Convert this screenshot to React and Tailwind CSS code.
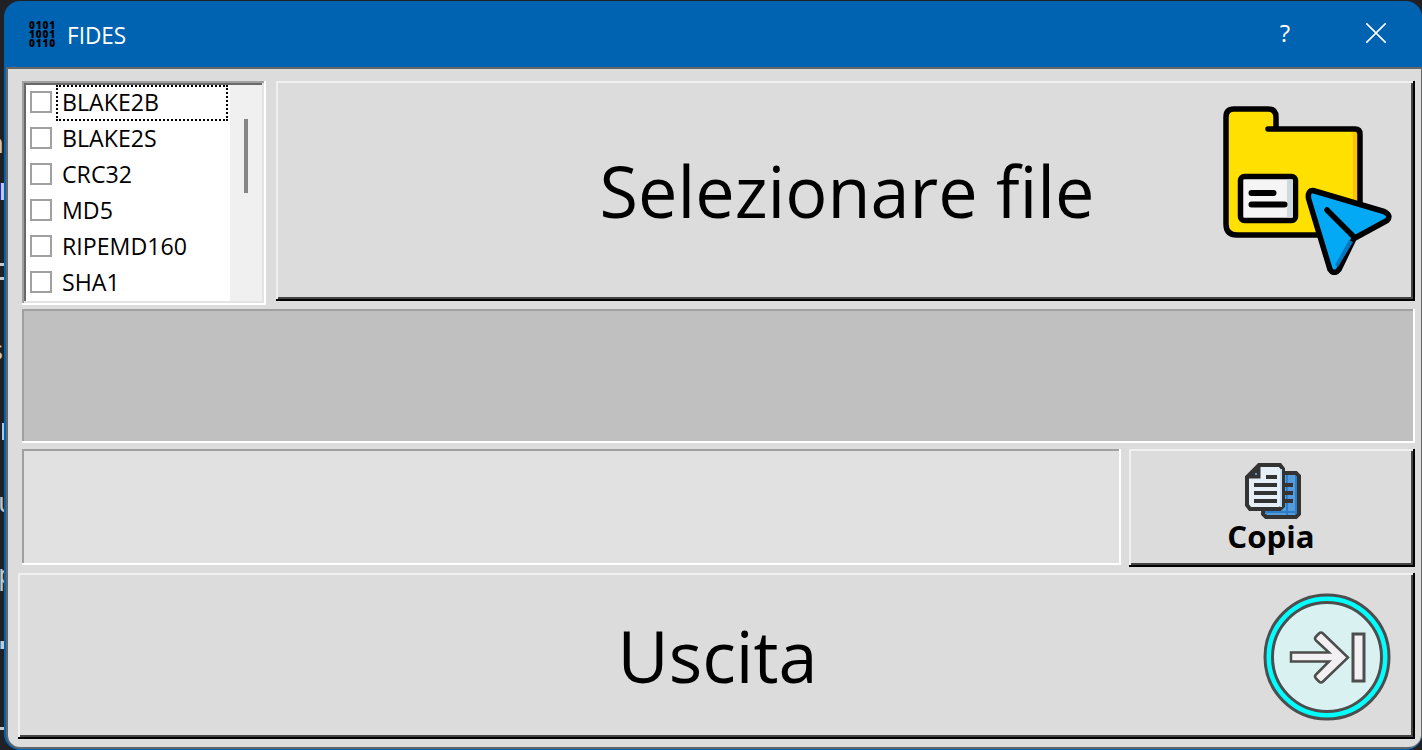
import React from 'react';

const algorithms = ['BLAKE2B', 'BLAKE2S', 'CRC32', 'MD5', 'RIPEMD160', 'SHA1'];

const raised =
  'block shadow-[inset_-2px_-2px_0_#000,inset_2px_2px_0_#f0f0f0,inset_-4px_-4px_0_#444]';
const sunken = 'shadow-[inset_-2px_-2px_0_#fff,inset_2px_2px_0_#a0a0a0]';

const FolderIcon = () => (
  <svg className="h-[170px] w-[170px]" viewBox="1222 106 170 170" fill="none" stroke="#000" strokeWidth="5.500" strokeLinecap="round" strokeLinejoin="round">
    <path d="M1226 117q0-7 7-7h36q7 0 7 7v12h80q4 0 4 4v103h-124q-10 0-10-10z" fill="#ffe000" stroke="none" />
    <path d="M1353 132h5v75h-5z" fill="#ffc107" stroke="none" />
    <path d="M1268 130h87q5 0 5 5v70M1276 128v-10q0-8-8-8h-34q-8 0-8 8v107q0 11 11 11h82" />
    <rect x="1240.500" y="177.500" width="55" height="44" rx="4" fill="#f5f5f5" />
    <path d="M1287 180.500h6v38h-6z" fill="#cfd8dc" stroke="none" />
    <path d="M1251.500 194h22M1251.500 205.500h33" strokeWidth="6" />
    <path d="M1313 191.500l71 21q8 4 3 9l-33 18-15 31q-5 6-9 0l-21.500-71q-1-8 4.500-8z" fill="#03a9f4" />
    <path d="M1353 243l-15 25-3-2 14-25z" fill="#0277bd" stroke="none" />
    <path d="M1327 211l27 27" />
  </svg>
);

const CopyIcon = () => (
  <svg className="h-14 w-14" viewBox="0 0 56 56" stroke="#333" strokeWidth="4">
    <path d="M20 10h31l3 3v38l-3 3H21l-3-3z" fill="#559bd9" />
    <path d="M51 13v38M42 12v40M20 49h31" stroke="#2b7ec9" strokeWidth="2" />
    <path d="M40 22h8M40 30h8M40 38h8" />
    <path d="M14 2h21l3 4v37l-3 3H5l-3-4V14z" fill="#e6eff8" />
    <path d="M36 6v38" stroke="#c5ddf2" strokeWidth="2" />
    <path d="M14 3v11H3z" fill="#333" strokeWidth="3" />
    <path d="M10 11h2" stroke="#559bd9" strokeWidth="2" />
    <path d="M21 14h11M9 22h23M9 30h23M9 38h23" />
  </svg>
);

const ExitIcon = () => (
  <svg className="h-32 w-32" viewBox="1263 593 128 128" fill="none" stroke="#4d4d4d">
    <circle cx="1327" cy="657" r="62" fill="#00ffff" strokeWidth="3" />
    <circle cx="1327" cy="657" r="54.500" fill="#d9f2f1" strokeWidth="3" />
    <path d="M1291 652.500h38l-13-12q-2-2 0-4l3-3q2-2 4 0l25 24-25 24q-2 2-4 0l-3-3q-2-2 0-4l13-13h-38z" fill="#f2f0f3" strokeWidth="2.500" />
    <path d="M1353 634h11v47h-11z" fill="#f2f0f3" strokeWidth="3" />
  </svg>
);

// Slice of the editor window that stays visible behind the dialog
const Backdrop = () => (
  <div className="relative h-full w-1 shrink-0 overflow-hidden text-[28px] leading-7 text-[#c8c8c8]">
    <span className="absolute top-[128px] right-0">n</span>
    <span className="absolute top-[183px] left-0 h-[17px] w-1 border-l border-[#2424c8] bg-[#c0c8e0]" />
    <span className="absolute top-[263px] h-[17px] w-1 border-y-[3px] border-[#c8c8c8]" />
    <span className="absolute top-[335px] right-px">s</span>
    <span className="absolute top-[423px] left-0.5 h-[17px] w-0.5 bg-[#a8c8f0]" />
    <span className="absolute top-[487px] left-[-2px]">u</span>
    <span className="absolute top-[559px] left-[-2px]">p</span>
    <span className="absolute top-[641px] h-2 w-1 border-l border-[#3090d0] bg-[#c8c8c8]" />
    <span className="absolute top-[727px] h-[3px] w-1 bg-[#c8c8c8]" />
  </div>
);

export default function App() {
  return (
    <div className="flex h-[750px] w-[1422px] overflow-hidden bg-[#202124] font-['Open_Sans',sans-serif] text-black">
      <Backdrop />
      <div className="mt-px h-[749px] w-[1418px] overflow-hidden rounded-[16px] border-b border-l-2 border-[#0063b1] bg-[#0063b1]">
        <header className="flex h-[66px] items-center text-white">
          <div className="ml-[23px] w-7 text-[10px] leading-[9px] font-extrabold tracking-[0.9px] text-black">
            <div>0101</div>
            <div>1001</div>
            <div>0110</div>
          </div>
          <h1 className="mt-0.5 ml-[10px] origin-left scale-x-[0.98] text-[23px]">FIDES</h1>
          <span className="mb-0.5 ml-auto text-[24px] leading-8">?</span>
          <svg className="mr-[36px] mb-0.5 ml-[76px] h-[20px] w-[20px]" viewBox="0 0 20 20" stroke="#fff" strokeWidth="1.600">
            <path d="M0 0l20 20M20 0L0 20" />
          </svg>
        </header>
        <main className="h-[682px] rounded-b-[14px] border-2 border-r border-[#666] bg-[#dcdcdc] pt-3 pr-1.5 pl-2.5">
          <div className="ml-1 flex">
            <div className="mr-2.5 flex h-[224px] w-[244px] bg-white p-1 shadow-[inset_-2px_-2px_0_#fff,inset_2px_2px_0_#a0a0a0,inset_-4px_-4px_0_#e3e3e3,inset_4px_4px_0_#696969]">
              <ul className="w-[204px]">
                {algorithms.map((name, i) => (
                  <li key={name} className="flex h-9 items-center pl-1">
                    <span className="mb-0.5 h-[22px] w-[22px] shrink-0 border-2 border-[#a0a0a0]" />
                    <span className={`ml-1 flex h-9 w-[172px] items-center border-2 pb-0.5 pl-1 text-[24px] leading-8 ${i === 0 ? 'border-dotted border-black' : 'border-transparent'}`}>
                      <span className="origin-left scale-x-[0.965]">{name}</span>
                    </span>
                  </li>
                ))}
              </ul>
              <div className="flex-1 bg-[#f0f0f0] pt-[34px] pl-3.5">
                <div className="h-[74px] w-1 bg-[#858585]" />
              </div>
            </div>
            <button className={`h-[220px] w-[1139px] ${raised}`}>
              <div className="flex items-center pb-0.5">
                <span className="mb-px flex-1 scale-x-[0.975] pl-[201px] text-center text-[72px] leading-none">Selezionare file</span>
                <span className="mr-[23px]"><FolderIcon /></span>
              </div>
            </button>
          </div>
          <div className={`mt-1 ml-1 h-[134px] w-[1393px] bg-[#c0c0c0] ${sunken}`} />
          <div className="mt-1.5 ml-1 flex gap-2">
            <div className={`h-[116px] w-[1099px] bg-[#e1e1e1] ${sunken}`} />
            <button className={`h-[118px] w-[286px] ${raised}`}>
              <div className="flex flex-col items-center pt-0.5 pr-0.5">
                <span className="ml-1"><CopyIcon /></span>
                <span className="scale-x-[1.04] text-[30px] leading-[36px] font-bold">Copia</span>
              </div>
            </button>
          </div>
          <button className={`mt-1.5 h-[166px] w-[1397px] ${raised}`}>
            <div className="flex items-center">
              <span className="mb-0.5 flex-1 scale-x-[0.975] pl-[158px] text-center text-[72px] leading-none">Uscita</span>
              <span className="mt-0.5 mr-6"><ExitIcon /></span>
            </div>
          </button>
        </main>
      </div>
    </div>
  );
}
